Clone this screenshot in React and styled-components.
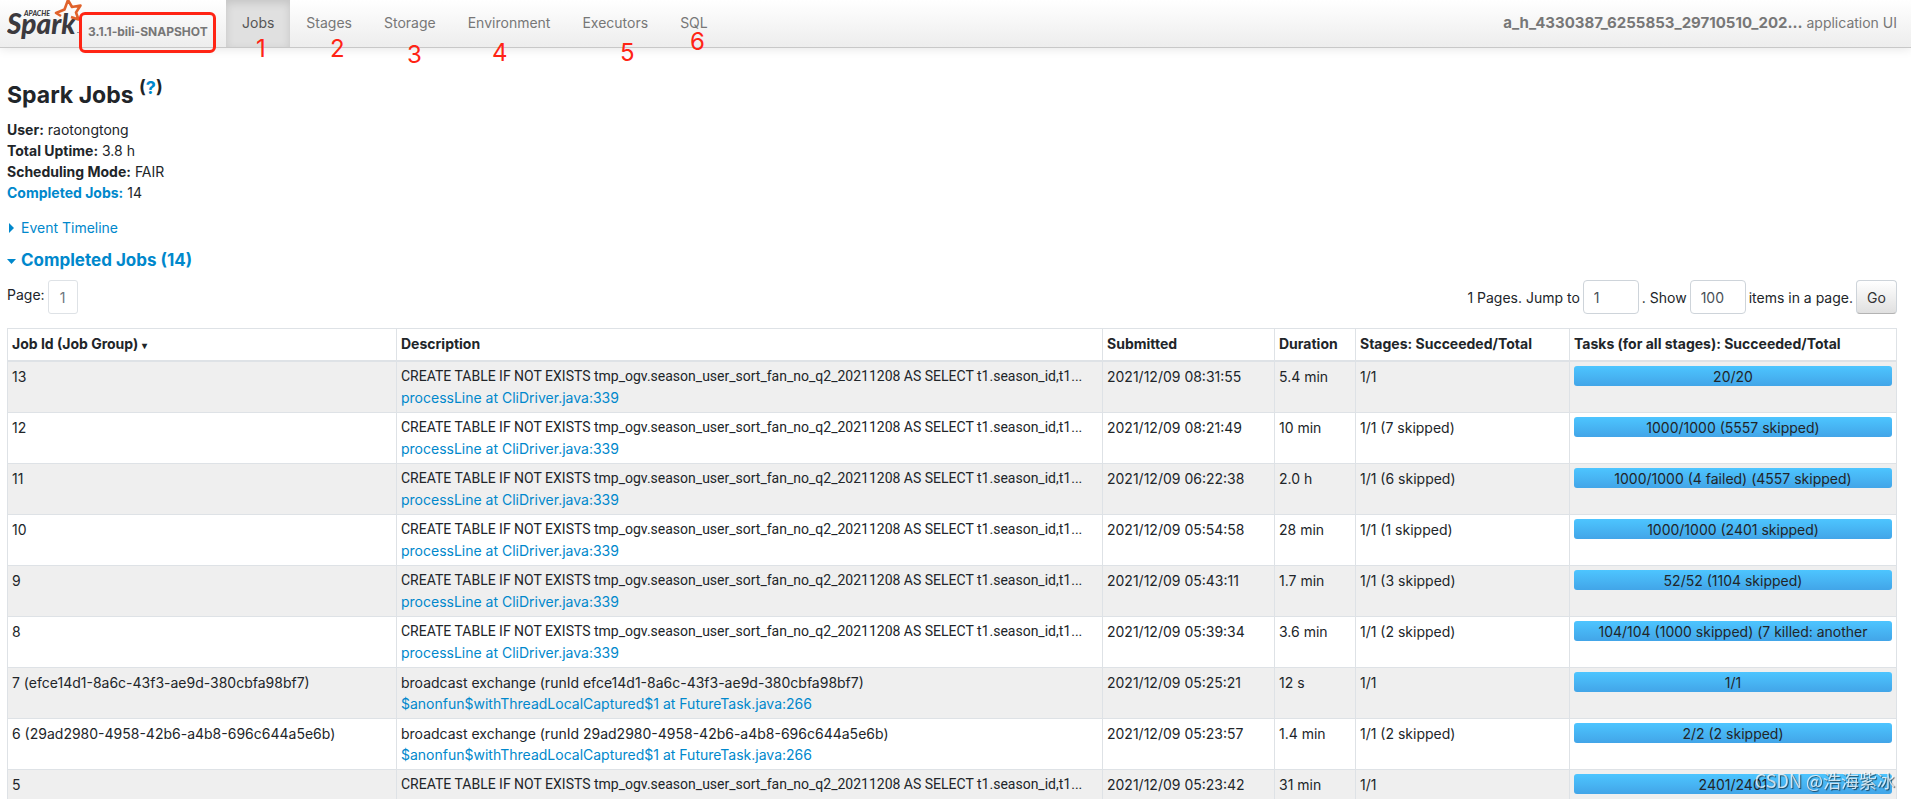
import React from 'react';
import styled, { createGlobalStyle } from 'styled-components';


const GlobalStyle = createGlobalStyle`
    * {
        box-sizing: border-box;
    }

    html {
        scrollbar-width: none;
    }

    body {
        margin: 0;
        background-color: #fff;
        color: #212529;
        font-family: Inter, "Noto Sans CJK SC", sans-serif;
        font-size: 14px;
        line-height: 21px;
    }

    a {
        color: #0088cc;
        text-decoration: none;
    }
`;

const tabs = ['Jobs', 'Stages', 'Storage', 'Environment', 'Executors', 'SQL'];

const marks = [
    { text: '1', x: 256, y: 34 },
    { text: '2', x: 330, y: 34 },
    { text: '3', x: 407, y: 40 },
    { text: '4', x: 492, y: 38 },
    { text: '5', x: 620, y: 38 },
    { text: '6', x: 690, y: 27 }
];

const sql = 'CREATE TABLE IF NOT EXISTS tmp_ogv.season_user_sort_fan_no_q2_20211208 AS SELECT t1.season_id,t1...';
const line = 'processLine at CliDriver.java:339';
const future = '$anonfun$withThreadLocalCaptured$1 at FutureTask.java:266';

const jobs = [
    { id: '13', desc: sql, link: line, submitted: '2021/12/09 08:31:55', duration: '5.4 min', stages: '1/1', tasks: '20/20' },
    { id: '12', desc: sql, link: line, submitted: '2021/12/09 08:21:49', duration: '10 min', stages: '1/1 (7 skipped)', tasks: '1000/1000 (5557 skipped)' },
    { id: '11', desc: sql, link: line, submitted: '2021/12/09 06:22:38', duration: '2.0 h', stages: '1/1 (6 skipped)', tasks: '1000/1000 (4 failed) (4557 skipped)' },
    { id: '10', desc: sql, link: line, submitted: '2021/12/09 05:54:58', duration: '28 min', stages: '1/1 (1 skipped)', tasks: '1000/1000 (2401 skipped)' },
    { id: '9', desc: sql, link: line, submitted: '2021/12/09 05:43:11', duration: '1.7 min', stages: '1/1 (3 skipped)', tasks: '52/52 (1104 skipped)' },
    { id: '8', desc: sql, link: line, submitted: '2021/12/09 05:39:34', duration: '3.6 min', stages: '1/1 (2 skipped)', tasks: '104/104 (1000 skipped) (7 killed: another' },
    { id: '7 (efce14d1-8a6c-43f3-ae9d-380cbfa98bf7)', desc: 'broadcast exchange (runId efce14d1-8a6c-43f3-ae9d-380cbfa98bf7)', link: future, submitted: '2021/12/09 05:25:21', duration: '12 s', stages: '1/1', tasks: '1/1' },
    { id: '6 (29ad2980-4958-42b6-a4b8-696c644a5e6b)', desc: 'broadcast exchange (runId 29ad2980-4958-42b6-a4b8-696c644a5e6b)', link: future, submitted: '2021/12/09 05:23:57', duration: '1.4 min', stages: '1/1 (2 skipped)', tasks: '2/2 (2 skipped)' },
    { id: '5', desc: sql, link: line, submitted: '2021/12/09 05:23:42', duration: '31 min', stages: '1/1', tasks: '2401/2401' }
];

function Logo() {
    return (
        <svg width="76" height="47" viewBox="0 0 76 47" role="img" aria-label="Apache Spark">
            <text x="17" y="16" fontFamily="Lato" fontSize="7" fontWeight="900" fontStyle="italic" fill="#3c3a3e">APACHE</text>
            <text x="0" y="34" fontFamily="Lato" fontSize="28" fontWeight="900" fontStyle="italic" fill="#3c3a3e">Spark</text>
            <path d="M54 16 L49 13 L57.500 9.500 L61 0 L65 7 L73.500 5.500 L69 12.500 L71.500 19.500 L64 17" fill="none" stroke="#e0622b" strokeWidth="2.600" strokeLinejoin="round" />
            <path d="M70 32.500 h3" stroke="#999" />
        </svg>
    )
}

function Navbar() {
    return (
        <NavbarStyled>
            <Brand href="#">
                <Logo />
                <span>3.1.1-bili-SNAPSHOT</span>
            </Brand>
            <Tabs>
                {tabs.map((tab, i) => (
                    <li key={tab}><Tab href="#" $active={i === 0}>{tab}</Tab></li>
                ))}
            </Tabs>
            <AppName><strong>a_h_4330387_6255853_29710510_202...</strong> application UI</AppName>
        </NavbarStyled>
    )
}

function Summary() {
    return (
        <SummaryStyled>
            <li><strong>User:</strong> raotongtong</li>
            <li><strong>Total Uptime:</strong> 3.8 h</li>
            <li><strong>Scheduling Mode:</strong> FAIR</li>
            <li><a href="#completed"><strong>Completed Jobs:</strong></a> 14</li>
        </SummaryStyled>
    )
}

function Pagination() {
    return (
        <PaginationStyled>
            <Pages>
                <span>Page:</span>
                <PageLink href="#">1</PageLink>
            </Pages>
            <Jump onSubmit={e => e.preventDefault()}>
                <label htmlFor="page">1 Pages. Jump to</label>
                <Field id="page" type="text" defaultValue="1" />
                <label htmlFor="size">. Show</label>
                <Field id="size" type="text" defaultValue="100" />
                <span>items in a page.</span>
                <GoButton type="submit">Go</GoButton>
            </Jump>
        </PaginationStyled>
    )
}

function JobsTable() {
    return (
        <Table>
            <colgroup>
                <Col $width="389px" />
                <Col />
                <Col $width="172px" />
                <Col $width="81px" />
                <Col $width="214px" />
                <Col $width="327px" />
            </colgroup>
            <thead>
                <tr>
                    <th>Job Id (Job Group) <Sort>▾</Sort></th>
                    <th>Description</th>
                    <th>Submitted</th>
                    <th>Duration</th>
                    <th>Stages: Succeeded/Total</th>
                    <th>Tasks (for all stages): Succeeded/Total</th>
                </tr>
            </thead>
            <tbody>
                {jobs.map(job => (
                    <tr key={job.id}>
                        <td>{job.id}</td>
                        <td>
                            <Description $query={job.desc === sql}>{job.desc}</Description>
                            <a href="#">{job.link}</a>
                        </td>
                        <td>{job.submitted}</td>
                        <td>{job.duration}</td>
                        <td>{job.stages}</td>
                        <td><Progress>{job.tasks}</Progress></td>
                    </tr>
                ))}
            </tbody>
        </Table>
    )
}

function App() {
    return (
        <>
            <GlobalStyle />
            <Navbar />
            <Main>
                <Title>Spark Jobs <sup>(<a href="#">?</a>)</sup></Title>
                <Summary />
                <Timeline href="#"><Arrow />Event Timeline</Timeline>
                <Completed id="completed"><a href="#completed"><Arrow $open />Completed Jobs (14)</a></Completed>
                <Pagination />
                <JobsTable />
            </Main>
            <Frame />
            {marks.map(mark => (
                <Mark key={mark.text} $x={mark.x} $y={mark.y}>{mark.text}</Mark>
            ))}
            <Watermark>CSDN @浩海紫冰</Watermark>
        </>
    )
}

const NavbarStyled = styled.nav`
    height: 48px;
    padding: 0 14px 0 7px;

    display: flex;
    align-items: stretch;

    background-image: linear-gradient(#fff, #ededed);
    border-bottom: 1px solid #c8c8c8;
    box-shadow: 0 1px 10px rgba(0, 0, 0, 0.1);
    color: #777;
`;

const Brand = styled.a`
    width: 219px;

    display: flex;
    gap: 5px;

    color: #777;
    font-size: 12px;
    font-weight: 700;

    span {
        padding-top: 21px;
    }
`;

const Tabs = styled.ul`
    margin: 0;
    padding: 0;

    display: flex;

    list-style: none;
`;

const Tab = styled.a`
    height: 47px;
    padding: 0 16px 2px;

    display: flex;
    align-items: center;

    color: ${({ $active }) => $active ? '#555' : '#777'};
    background-color: ${({ $active }) => $active ? '#e0e0e0' : 'transparent'};
    box-shadow: ${({ $active }) => $active ? 'inset 0 3px 8px rgba(0, 0, 0, 0.125)' : 'none'};
`;

const AppName = styled.span`
    margin-left: auto;
    padding-bottom: 2px;
    align-self: center;

    strong {
        font-size: 15px;
    }
`;

const Main = styled.main`
    padding: 33px 14px 0 7px;
`;

const Title = styled.h3`
    margin: 0 0 9px;

    font-size: 23px;
    line-height: 29px;

    sup {
        font-size: 18px;
        line-height: 0;
    }
`;

const SummaryStyled = styled.ul`
    margin: 0 0 14px;
    padding: 0;

    list-style: none;
`;

const Timeline = styled.a`
    display: block;
`;

const Arrow = styled.span`
    width: ${({ $open }) => $open ? '9px' : '5px'};
    height: ${({ $open }) => $open ? '5px' : '10px'};
    margin: ${({ $open }) => $open ? '0 5px 2px 0' : '0 7px 0 2px'};

    display: inline-block;

    background-color: #0088cc;
    clip-path: ${({ $open }) => $open ? 'polygon(0 0, 100% 0, 50% 100%)' : 'polygon(0 0, 100% 50%, 0 100%)'};
`;

const Completed = styled.h4`
    margin: 12px 0 9px;

    font-size: 17px;
    line-height: 21px;
`;

const PaginationStyled = styled.div`
    margin-bottom: 14px;

    display: flex;
    justify-content: space-between;
`;

const Pages = styled.div`
    display: flex;
    gap: 3px;

    span {
        padding-top: 4px;
    }
`;

const PageLink = styled.a`
    width: 30px;
    height: 34px;

    display: flex;
    align-items: center;
    justify-content: center;

    border: 1px solid #dee2e6;
    border-radius: 3px;
    color: #6c757d;
`;

const Jump = styled.form`
    display: flex;
    align-items: center;
    gap: 3px;
`;

const Field = styled.input`
    width: 56px;
    height: 34px;
    padding: 0 10px;

    border: 1px solid #ced4da;
    border-radius: 4px;
    color: #495057;
    font: inherit;
`;

const GoButton = styled.button`
    width: 41px;
    height: 34px;
    padding: 0;

    background-image: linear-gradient(#fff, #e0e0e0);
    border: 1px solid #ced4da;
    border-bottom-color: #b3b3b3;
    border-radius: 4px;
    color: #333;
    font: inherit;
`;

const Table = styled.table`
    width: 100%;

    table-layout: fixed;
    border-collapse: collapse;

    th, td {
        padding: 4px;

        border: 1px solid #dee2e6;
        text-align: left;
        vertical-align: top;
        white-space: nowrap;
    }

    th {
        border-bottom-width: 2px;
        font-weight: 700;
    }

    tbody tr:nth-child(odd) {
        background-color: #efefef;
    }
`;

const Col = styled.col`
    width: ${({ $width }) => $width || 'auto'};
`;

const Sort = styled.span`
    font-size: 10px;
`;

const Description = styled.div`
    overflow: hidden;

    font-family: ${({ $query }) => $query ? 'Roboto, sans-serif' : 'inherit'};
    text-overflow: ellipsis;
`;

const Progress = styled.div`
    height: 20px;

    overflow: hidden;

    background-image: linear-gradient(#4dc5ff, #42a5e8);
    border-radius: 3px;
    text-align: center;
`;

// hand-drawn notes laid over the page
const Frame = styled.div`
    position: absolute;
    top: 12px;
    left: 79px;

    width: 137px;
    height: 41px;

    border: 3px solid #ff2414;
    border-radius: 6px;
`;

const Mark = styled.span`
    position: absolute;
    top: ${({ $y }) => $y}px;
    left: ${({ $x }) => $x}px;

    color: #ff2414;
    font-size: 24px;
    line-height: 29px;
`;

const Watermark = styled.div`
    position: fixed;
    right: 16px;
    bottom: 8px;

    color: rgba(255, 255, 255, 0.75);
    font-family: "Noto Sans CJK SC", sans-serif;
    font-size: 18px;
    text-shadow: 1px 1px 1px rgba(0, 0, 0, 0.6);
`;


export default App
